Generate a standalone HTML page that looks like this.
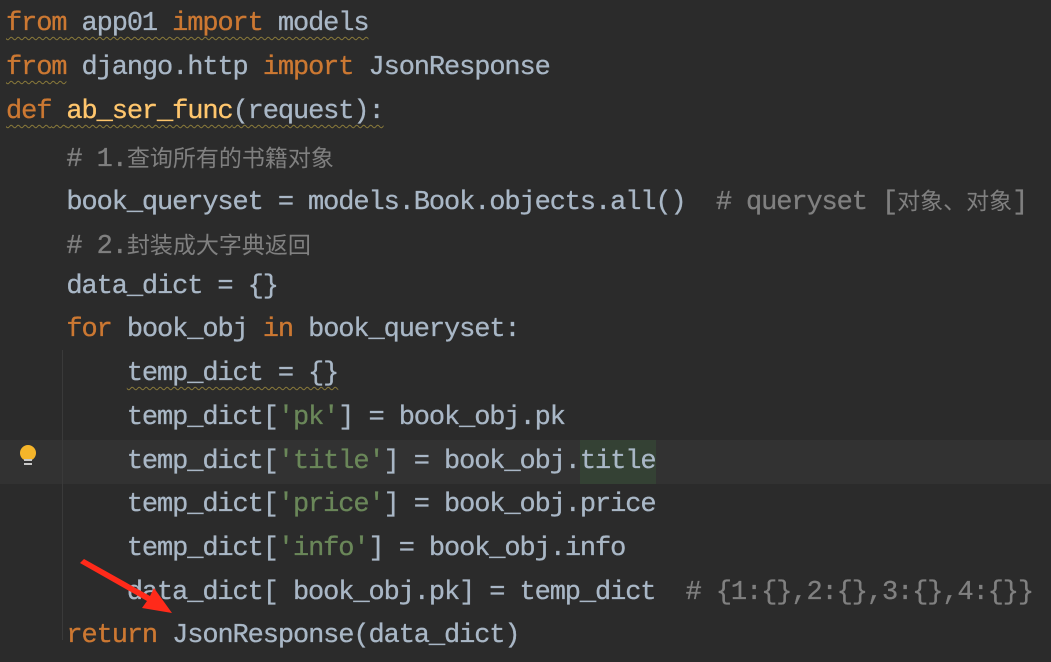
<!DOCTYPE html>
<html><head><meta charset="utf-8"><style>
html,body{margin:0;padding:0;width:1051px;height:662px;overflow:hidden;background:#2b2b2b}
.l{position:absolute;left:6px;height:44px;line-height:44px;white-space:pre;font-family:"Liberation Mono","Noto Sans CJK SC",monospace;font-size:27px;color:#a9b7c6;letter-spacing:-1.1px;-webkit-text-stroke:0.3px}
.k{color:#cc7832}.c{color:#808080}.s{color:#6a8759}.f{color:#ffc66d}
.cj{font-family:"Noto Sans CJK SC",sans-serif;font-size:23px;letter-spacing:0;-webkit-text-stroke:0}
.w{text-decoration:underline wavy #8a7a3a;text-decoration-thickness:1px;text-underline-offset:6px}
</style></head><body>
<div style="position:absolute;left:0;top:440px;width:1051px;height:44px;background:#323232"></div>
<div style="position:absolute;left:580px;top:440px;width:76px;height:44px;background:#344134"></div>
<div style="position:absolute;left:62px;top:350px;width:1px;height:290px;background:#3a3a3a"></div>
<div style="position:absolute;left:20px;top:445px;width:16px;height:16px;border-radius:50%;background:#f5b52a"></div>
<div style="position:absolute;left:24px;top:459px;width:8px;height:2px;background:#c8c8c8"></div>
<div style="position:absolute;left:24px;top:463px;width:8px;height:2px;background:#c8c8c8"></div>
<div class="l" style="top:2px"><span class="w"><span class="k">from</span> app01 <span class="k">import</span> models</span></div>
<div class="l" style="top:46px"><span class="w"><span class="k">from</span></span> django.http <span class="k">import</span> JsonResponse</div>
<div class="l" style="top:90px"><span class="w"><span class="k">def</span> <span class="f">ab_ser_func</span>(request):</span></div>
<div class="l c" style="top:134px">    # 1.<span class="cj">查询所有的书籍对象</span></div>
<div class="l" style="top:177px">    book_queryset = models.Book.objects.all()  <span class="c"># queryset [<span class="cj">对象、对象</span>]</span></div>
<div class="l c" style="top:221px">    # 2.<span class="cj">封装成大字典返回</span></div>
<div class="l" style="top:265px">    data_dict = {}</div>
<div class="l" style="top:308px">    <span class="k">for</span> book_obj <span class="k">in</span> book_queryset:</div>
<div class="l" style="top:352px">        <span class="w">temp_dict = {}</span></div>
<div class="l" style="top:396px">        temp_dict[<span class="s">'pk'</span>] = book_obj.pk</div>
<div class="l" style="top:440px">        temp_dict[<span class="s">'title'</span>] = book_obj.title</div>
<div class="l" style="top:483px">        temp_dict[<span class="s">'price'</span>] = book_obj.price</div>
<div class="l" style="top:527px">        temp_dict[<span class="s">'info'</span>] = book_obj.info</div>
<div class="l" style="top:571px">        data_dict[ book_obj.pk] = temp_dict  <span class="c"># {1:{},2:{},3:{},4:{}}</span></div>
<div class="l" style="top:614px">    <span class="k">return</span> JsonResponse(data_dict)</div>
<svg style="position:absolute;left:0;top:0" width="1051" height="662">
<polygon points="80,563 84,559 150,596 154,588 172,613 142,608 147,601" fill="#ff2a1a"/>
</svg>
</body></html>
